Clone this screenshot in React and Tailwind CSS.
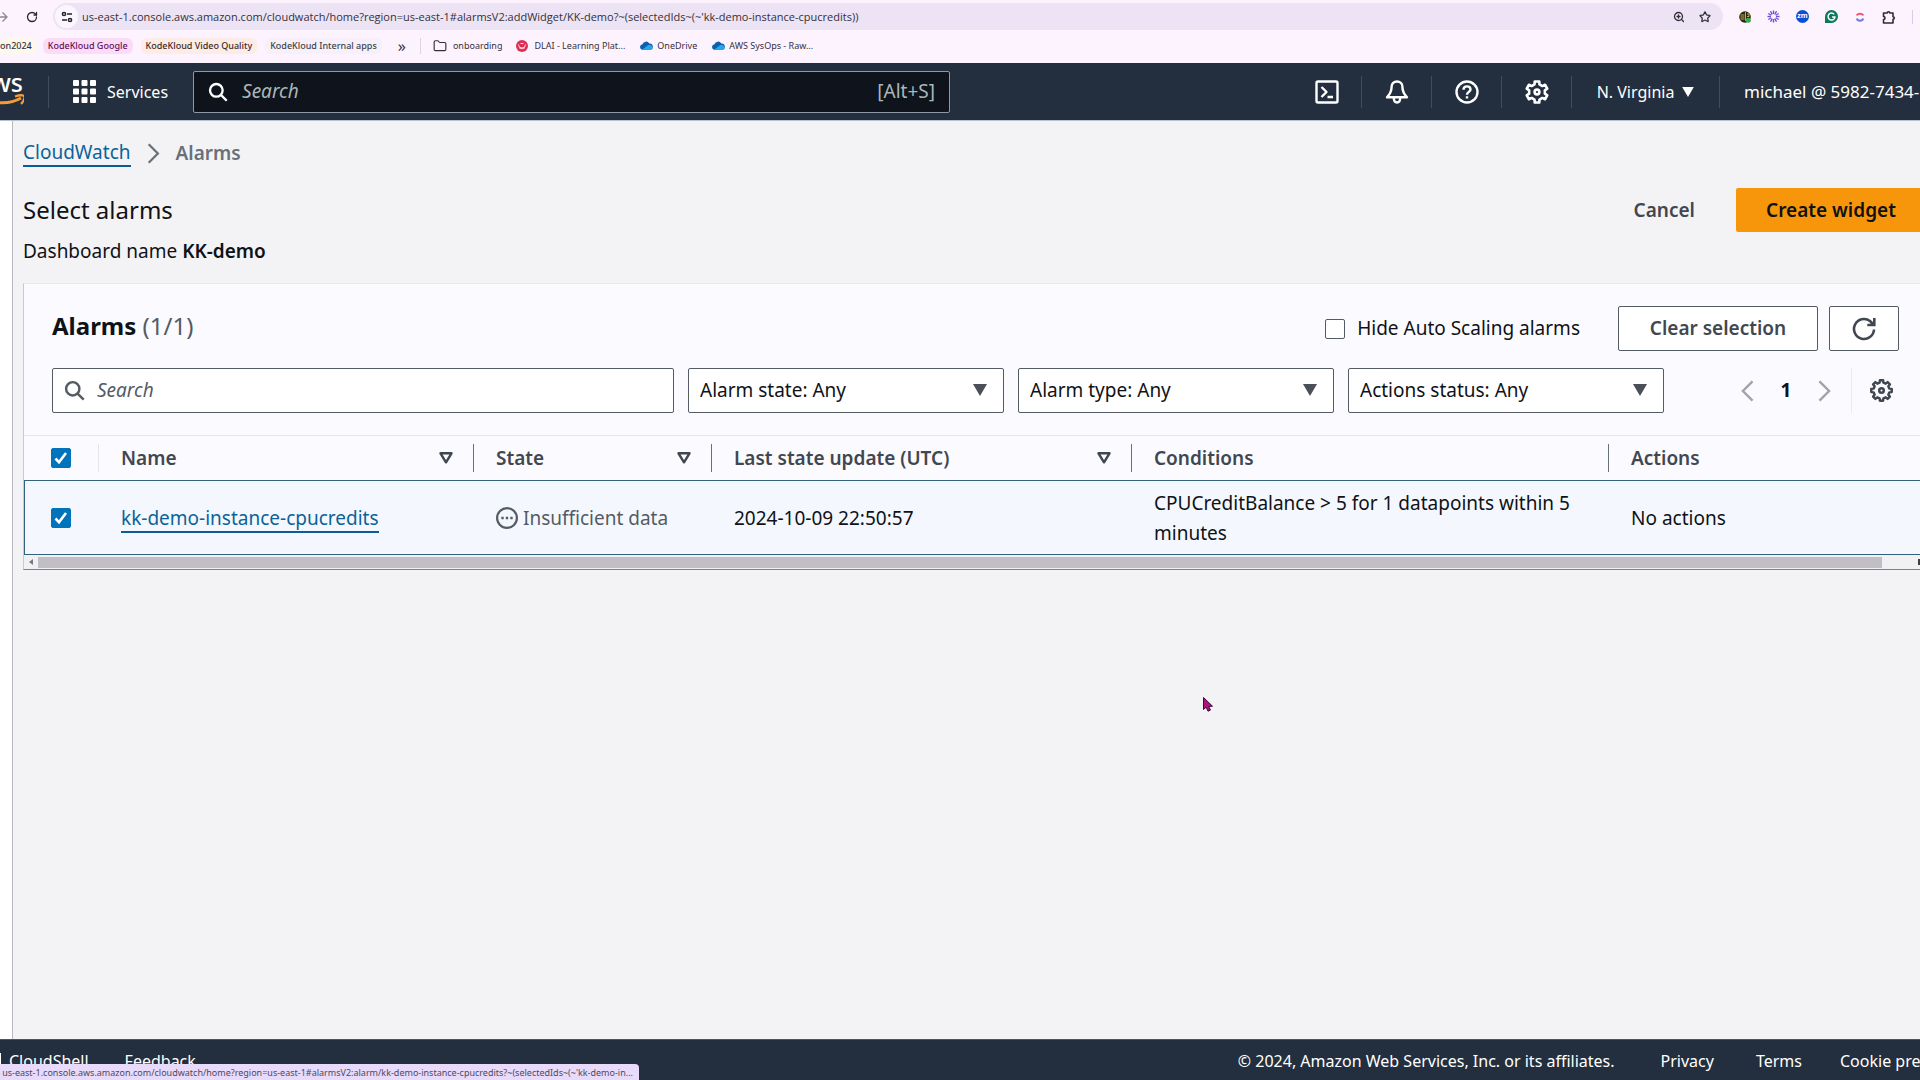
import { useState } from 'react'
import { Folder, RotateCw, Star, ZoomIn } from 'lucide-react'

const BOOKMARK_GROUPS = [
  { label: 'KodeKloud Google', cls: 'bg-[#fbdcf6] text-[#650f5c]' },
  { label: 'KodeKloud Video Quality', cls: 'bg-[#fdebe6] text-[#3b2a1e]' },
  { label: 'KodeKloud Internal apps', cls: 'bg-[#f7f0fa] text-[#3f4247]' },
]

const FILTERS = ['Alarm state: Any', 'Alarm type: Any', 'Actions status: Any']

const COLUMNS = [
  { label: 'Name', sortable: true },
  { label: 'State', sortable: true },
  { label: 'Last state update (UTC)', sortable: true },
  { label: 'Conditions' },
  { label: 'Actions', last: true },
]

// closed outline of a cog centred on 12,12
function gearPath(teeth, outer, inner) {
  const step = (Math.PI * 2) / teeth
  const pts = []
  for (let i = 0; i < teeth; i++) {
    const a = i * step - Math.PI / 2
    const spots = [
      [outer, -0.2],
      [outer, 0.2],
      [inner, 0.3],
      [inner, 0.7],
    ]
    spots.forEach(([r, k]) => {
      pts.push(`${(12 + r * Math.cos(a + k * step)).toFixed(2)} ${(12 + r * Math.sin(a + k * step)).toFixed(2)}`)
    })
  }
  return `M${pts.join('L')}Z`
}

const GearIcon = ({ teeth = 6, outer = 10.8, inner = 8, className }) => (
  <svg viewBox="0 0 24 24" fill="none" stroke="currentColor" strokeWidth="2.6" strokeLinejoin="round" className={className}>
    <path d={gearPath(teeth, outer, inner)} />
    <circle cx="12" cy="12" r="2.4" />
  </svg>
)

const SearchIcon = ({ className }) => (
  <svg viewBox="0 0 24 24" fill="none" stroke="currentColor" strokeWidth="2.8" className={className}>
    <circle cx="10" cy="10" r="7.6" />
    <path d="M15.5 15.5L22.5 22.5" />
  </svg>
)

const CloudShellIcon = () => (
  <svg viewBox="0 0 24 24" fill="none" stroke="currentColor" strokeWidth="2.4" strokeLinejoin="round" className="size-6">
    <rect x="1.5" y="1.5" width="21" height="21" rx="1.5" />
    <path d="M6.5 7l5 5-5 5M12.5 17h5.5" />
  </svg>
)

const BellIcon = () => (
  <svg viewBox="0 0 24 24" fill="none" stroke="currentColor" strokeWidth="2.4" strokeLinejoin="round" className="size-6">
    <path d="M12 1.5c-3 0-5.4 2.2-5.4 5.2 0 4-1.4 7.2-4.6 10.6h20c-3.2-3.4-4.6-6.6-4.6-10.6 0-3-2.4-5.2-5.4-5.2z" />
    <path d="M8.8 17.8c0 3 1.2 4.7 3.2 4.7s3.2-1.7 3.2-4.7" />
  </svg>
)

const HelpIcon = () => (
  <svg viewBox="0 0 24 24" fill="none" stroke="currentColor" strokeWidth="2.4" className="size-6">
    <circle cx="12" cy="12" r="10.5" />
    <path d="M8.5 9.8c0-2.2 1.5-3.4 3.5-3.4s3.5 1.2 3.5 3.1c0 2.3-3.5 2.5-3.5 5.2M12 16.2v2.4" />
  </svg>
)

const CaretDown = ({ className }) => (
  <svg viewBox="0 0 14 12" fill="currentColor" className={className}>
    <path d="M0 0h14L7 12z" />
  </svg>
)

const SortIcon = () => (
  <svg viewBox="0 0 14 12" fill="none" stroke="currentColor" strokeWidth="2.4" strokeLinejoin="round" className="h-3 w-3.5">
    <path d="M1.5 1.3h11L7 10.3z" />
  </svg>
)

const Chevron = ({ left, className }) => (
  <svg viewBox="0 0 14 24" fill="none" stroke="currentColor" strokeWidth="2.6" className={className}>
    <path d={left ? 'M12.5 1.5L2 12l10.5 10.5' : 'M1.5 1.5L12 12 1.5 22.5'} />
  </svg>
)

const OneDriveIcon = () => (
  <svg viewBox="0 0 14 9" className="h-[9px] w-3.5 shrink-0">
    <path d="M3.5 3.2A3.7 3.7 0 0 1 10.3 2.6 3 3 0 0 1 11 8.8H3A2.9 2.9 0 0 1 3.5 3.2z" fill="#0a5fb0" />
    <path d="M3 8.8 8.2 4.8a3.5 3.5 0 0 1 5 .6A2.2 2.2 0 0 1 12 8.8z" fill="#2aa5e8" />
  </svg>
)

const AwsLogo = () => (
  <svg viewBox="0 0 48 36" className="h-9 w-12 shrink-0">
    <text x="47" y="18" textAnchor="end" fill="#fff" fontFamily="Noto Sans, sans-serif" fontWeight="500" fontSize="25">
      aws
    </text>
    <path d="M3 20c12 11 30 11 42 4" fill="none" stroke="#f79b34" strokeWidth="3" />
    <path d="M39 22.5c4-1.5 8-1.5 9-.5s0 5-3 8" fill="none" stroke="#f79b34" strokeWidth="2.2" />
  </svg>
)

function Checkbox({ checked, onChange, label, children }) {
  return (
    <label className="flex items-center gap-3">
      <span className="relative flex size-5">
        <input
          type="checkbox"
          aria-label={label}
          checked={checked}
          onChange={(e) => onChange(e.target.checked)}
          className="size-5 appearance-none rounded-xs border border-[#545b64] bg-white checked:border-[#0073bb] checked:bg-[#0073bb]"
        />
        {checked && (
          <svg viewBox="0 0 20 20" fill="none" stroke="#fff" strokeWidth="2.6" className="pointer-events-none absolute inset-0 size-5">
            <path d="M4.5 10.5l3.5 3.8 7-9.3" />
          </svg>
        )}
      </span>
      {children}
    </label>
  )
}

function BrowserChrome() {
  return (
    <div className="shrink-0 bg-[#fdf3ff] text-[#35313b]">
      <div className="flex items-center pt-[3px]">
        <div className="flex w-[53px] items-center gap-[18px] text-[#2a2630]">
          <span className="flex w-2 justify-end overflow-hidden text-[#8d8794]">
            <svg viewBox="0 0 12 12" fill="none" stroke="currentColor" strokeWidth="1.3" className="size-3 shrink-0">
              <path d="M0 6h11M6.5 1.5L11 6l-4.5 4.5" />
            </svg>
          </span>
          <button aria-label="Reload">
            <RotateCw className="size-3" strokeWidth={2.6} />
          </button>
        </div>
        <div className="flex h-[27px] flex-1 items-center rounded-full bg-[#ece3f5] pl-0.5">
          <span className="flex size-[23px] items-center justify-center rounded-full bg-[#fbf5ff]">
            <svg viewBox="0 0 12 12" fill="none" stroke="#222" strokeWidth="1.5" className="size-3">
              <circle cx="3" cy="3" r="1.6" />
              <path d="M6 3h5M1 9h5" />
              <circle cx="9" cy="9" r="1.6" />
            </svg>
          </span>
          <input
            aria-label="Address"
            readOnly
            className="ml-1 min-w-0 flex-1 font-['Open_Sans',sans-serif] text-[11px] leading-4 outline-none"
            value="us-east-1.console.aws.amazon.com/cloudwatch/home?region=us-east-1#alarmsV2:addWidget/KK-demo?~(selectedIds~(~'kk-demo-instance-cpucredits))"
          />
          <div className="flex items-center gap-3.5 pr-3 text-[#35313b]">
            <ZoomIn className="size-3" strokeWidth={2.6} />
            <Star className="size-3" strokeWidth={2.6} />
          </div>
        </div>
        <div className="flex w-[197px] items-center gap-4 pl-4">
          <svg viewBox="0 0 12 12" className="size-3">
            <circle cx="6" cy="6" r="5.8" fill="#2b2616" />
            <path d="M1.5 4h4M1.5 6h4M1.5 8h4M6.5 1v9M8 3h2v2.5H8" stroke="#d8b84a" strokeWidth=".9" fill="none" />
            <circle cx="9.3" cy="9.3" r="2.5" fill="#2fae4c" />
          </svg>
          <svg viewBox="0 0 14 14" stroke="#6a4fd8" strokeWidth="1.5" className="size-[13px]">
            {[0, 30, 60, 90, 120, 150, 180, 210, 240, 270, 300, 330].map((r) => (
              <path key={r} d="M7 .5v3.8" transform={`rotate(${r} 7 7)`} />
            ))}
          </svg>
          <span className="flex size-[13px] items-center justify-center rounded-full bg-[#0b4fd6] text-[7px] font-bold text-white">zm</span>
          <svg viewBox="0 0 12 12" className="size-[13px]">
            <path d="M0 6a6 6 0 1 1 6 6H0z" fill="#0b7a5c" />
            <path d="M8.5 4A3.2 3.2 0 1 0 9.2 6.5H6.5" fill="none" stroke="#fff" strokeWidth="1.3" />
          </svg>
          <svg viewBox="0 0 12 12" fill="none" strokeWidth="2" className="size-3">
            <path d="M2.8 4.5C3.5 2 8.5 2 9.2 4.5" stroke="#f0557a" />
            <path d="M2.8 7.5C3.5 10.5 8.5 10.5 9.2 7.5" stroke="#6f7be0" />
          </svg>
          <svg viewBox="0 0 14 14" fill="none" stroke="#2f2b36" strokeWidth="1.6" strokeLinejoin="round" className="size-3.5">
            <path d="M1.5 3h3.7a1.3 1.3 0 0 1 2.6 0H11v3.7a1.3 1.3 0 0 1 0 2.6V13H1.5V9.5a1.5 1.5 0 0 0 0-3z" />
          </svg>
          <span className="h-3.5 w-px bg-[#dccbe8]" />
        </div>
      </div>
      <nav className="flex h-[33px] items-center overflow-hidden pb-0.5 text-[9px] leading-4 whitespace-nowrap">
        <span className="rounded-md bg-[#fdf8ea] pr-1 font-medium">on2024</span>
        <div className="ml-[7px] flex gap-2">
          {BOOKMARK_GROUPS.map((g) => (
            <button key={g.label} className={`rounded-md px-[5px] font-medium ${g.cls}`}>
              {g.label}
            </button>
          ))}
        </div>
        <span className="ml-4 text-base">»</span>
        <span className="ml-3.5 h-4 w-px bg-[#e3cfe8]" />
        <a href="#" className="ml-3 flex items-center gap-1.5">
          <Folder className="size-3.5" />
          onboarding
        </a>
        <a href="#" className="ml-3.5 flex items-center gap-1.5">
          <svg viewBox="0 0 12 12" className="size-3">
            <circle cx="6" cy="6" r="6" fill="#dd2f55" />
            <path d="M2.5 4.5a3.5 3.5 0 0 0 7 0M3 7.5a3.5 2.5 0 0 0 6 0M4.5 3.5h3" fill="none" stroke="#ffd3dc" />
          </svg>
          DLAI - Learning Plat...
        </a>
        <a href="#" className="ml-3.5 flex items-center gap-1">
          <OneDriveIcon />
          OneDrive
        </a>
        <a href="#" className="ml-3.5 flex items-center gap-1">
          <OneDriveIcon />
          AWS SysOps - Raw...
        </a>
      </nav>
    </div>
  )
}

function ConsoleNav() {
  return (
    <header className="flex h-[58px] shrink-0 items-center border-b border-[#b9c0cc] bg-[#232f3e] text-[16px] whitespace-nowrap text-white">
      <div className="flex w-6 justify-end overflow-hidden">
        <AwsLogo />
      </div>
      <span className="ml-6 h-8 w-px bg-[#414d5c]" />
      <button className="ml-6 flex items-center gap-[11px]">
        <svg viewBox="0 0 23 23" fill="currentColor" className="size-[23px]">
          {[0, 8.5, 17].map((y) => [0, 8.5, 17].map((x) => <rect key={`${x}-${y}`} x={x} y={y} width="6" height="6" rx="1" />))}
        </svg>
        Services
      </button>
      <div className="ml-[25px] flex h-[42px] w-[757px] items-center rounded-xs border border-[#8d99a8] bg-[#0f141c] px-3.5">
        <SearchIcon className="size-5" />
        <input
          aria-label="Search services"
          placeholder="Search"
          className="ml-3.5 min-w-0 flex-1 text-[19px] outline-none placeholder:text-[#aab7b8] placeholder:italic"
        />
        <span className="text-[19px] text-[#aab7b8]">[Alt+S]</span>
      </div>
      <div className="ml-auto flex items-center">
        {[
          ['CloudShell', <CloudShellIcon />],
          ['Notifications', <BellIcon />],
          ['Help', <HelpIcon />],
          ['Settings', <GearIcon className="size-6" />],
        ].map(([label, icon]) => (
          <button key={label} aria-label={label} className="flex h-8 w-[70px] items-center justify-center border-r border-[#414d5c]">
            {icon}
          </button>
        ))}
        <button className="flex h-8 w-[148px] items-center justify-center gap-2 border-r border-[#414d5c]">
          N. Virginia
          <CaretDown className="h-2.5 w-3" />
        </button>
        <button className="w-[200px] overflow-hidden pl-6 text-left text-[17px]">michael @ 5982-7434-</button>
      </div>
    </header>
  )
}

function AlarmsTable({ selected, onSelect }) {
  return (
    <table className="w-full table-fixed border-separate border-spacing-0 text-left text-[19px] leading-[30px]">
      <colgroup>
        <col className="w-[75px]" />
        <col className="w-[375px]" />
        <col className="w-[238px]" />
        <col className="w-[420px]" />
        <col className="w-[477px]" />
        <col />
      </colgroup>
      <thead className="text-[#414750]">
        <tr className="h-[45px]">
          <th className="border-t border-[#e4e6ea] p-0">
            <div className="flex h-7 items-center border-r border-[#e4e6ea] pl-[27px]">
              <Checkbox label="Select all alarms" checked={selected} onChange={onSelect} />
            </div>
          </th>
          {COLUMNS.map((c) => (
            <th key={c.label} className="border-t border-[#e4e6ea] p-0 font-semibold">
              <div className={`flex h-7 items-center justify-between pr-5 pl-[22px] ${c.last ? '' : 'border-r border-[#687078]'}`}>
                {c.label}
                {c.sortable && <SortIcon />}
              </div>
            </th>
          ))}
        </tr>
      </thead>
      <tbody>
        <tr className="h-[75px] *:border-y *:border-[#33617f] *:bg-[#f4f8fe] *:py-0">
          <td className="border-l pl-[26px]">
            <Checkbox label="Select kk-demo-instance-cpucredits" checked={selected} onChange={onSelect} />
          </td>
          <td className="pl-[22px]">
            <a href="#" className="border-b-2 border-[#0b5c97] text-[#0b6398]">kk-demo-instance-cpucredits</a>
          </td>
          <td className="pl-[22px] text-[#545b64]">
            <div className="flex items-center gap-[5px]">
              <svg viewBox="0 0 24 24" fill="none" stroke="currentColor" strokeWidth="2.4" className="size-[22px] shrink-0">
                <circle cx="12" cy="12" r="10.8" />
                <path d="M5.8 12h2.6M10.7 12h2.6M15.6 12h2.6" strokeWidth="2.6" />
              </svg>
              Insufficient data
            </div>
          </td>
          <td className="pl-[22px]">2024-10-09 22:50:57</td>
          <td className="pr-6 pl-[22px]">CPUCreditBalance &gt; 5 for 1 datapoints within 5 minutes</td>
          <td className="pl-[22px]">No actions</td>
        </tr>
      </tbody>
    </table>
  )
}

function AlarmsPanel() {
  const [selected, setSelected] = useState(true)
  const [hideScaling, setHideScaling] = useState(false)

  return (
    <section className="border-t border-b border-l border-t-[#e8e8ea] border-b-[#7f8287] border-l-[#c8cacd] bg-[#fbfaff]">
      <div className="flex items-start pt-[22px] pr-[21px] pl-7">
        <h2 className="text-[24px] leading-10 font-bold">
          Alarms <span className="font-normal text-[#545b64]">({selected ? '1/1' : '1'})</span>
        </h2>
        <div className="ml-auto flex items-center text-[19px]">
          <Checkbox checked={hideScaling} onChange={setHideScaling}>
            Hide Auto Scaling alarms
          </Checkbox>
          <button
            onClick={() => setSelected(false)}
            className="ml-[38px] h-[45px] w-[200px] rounded-xs border border-[#545b64] bg-white font-semibold text-[#414750]"
          >
            Clear selection
          </button>
          <button
            aria-label="Refresh"
            className="ml-[11px] flex h-[45px] w-[70px] items-center justify-center rounded-xs border border-[#545b64] bg-white text-[#414750]"
          >
            <svg viewBox="0 0 24 24" fill="none" stroke="currentColor" strokeWidth="2.6" className="size-6">
              <path d="M22 12.5a10 10 0 1 1-4-8.5l3 3M22.3 1v7h-7" />
            </svg>
          </button>
        </div>
      </div>

      <div className="flex items-center pt-[17px] pr-[27px] pb-[22px] pl-7 text-[19px]">
        <div className="flex h-[45px] w-[622px] items-center rounded-xs border border-[#545b64] bg-white px-[11px]">
          <SearchIcon className="size-[21px] text-[#545b64]" />
          <input
            aria-label="Search alarms"
            placeholder="Search"
            className="ml-3 min-w-0 flex-1 outline-none placeholder:text-[#545b64] placeholder:italic"
          />
        </div>
        {FILTERS.map((f) => (
          <div key={f} className="relative ml-3.5 w-[316px]">
            <select aria-label={f.split(':')[0]} className="h-[45px] w-full appearance-none rounded-xs border border-[#545b64] bg-white pl-[11px]">
              <option>{f}</option>
            </select>
            <CaretDown className="pointer-events-none absolute top-4 right-4 h-3 w-4 text-[#4a4f58]" />
          </div>
        ))}
        <div className="ml-auto flex items-center">
          <button aria-label="Previous page" className="text-[#a0a4aa]">
            <Chevron left className="h-[22px] w-[13px]" />
          </button>
          <span className="w-16 text-center font-bold">1</span>
          <button aria-label="Next page" className="text-[#a0a4aa]">
            <Chevron className="h-[22px] w-[13px]" />
          </button>
          <span className="ml-5 h-[45px] w-px bg-[#e9ebed]" />
          <button aria-label="Preferences" className="ml-[18px] text-[#414750]">
            <GearIcon teeth={8} outer={10.8} inner={8.4} className="size-[23px]" />
          </button>
        </div>
      </div>

      <AlarmsTable selected={selected} onSelect={setSelected} />

      <div className="flex h-3.5 items-center bg-[#f1f1f4]">
        <span className="flex w-3.5 justify-center text-[#77797e]">
          <svg viewBox="0 0 4 6" fill="currentColor" className="h-1.5 w-1">
            <path d="M4 0v6L0 3z" />
          </svg>
        </span>
        <span className="h-[11px] flex-1 bg-[#c1bfc3]" />
        <span className="flex w-[38px] justify-end">
          <span className="h-1.5 w-0.5 bg-[#3c3e42]" />
        </span>
      </div>
    </section>
  )
}

export default function App() {
  return (
    <div className="relative flex h-screen flex-col overflow-hidden bg-[#f3f3f6] font-['Noto_Sans',sans-serif] text-[#0f1216]">
      <BrowserChrome />
      <ConsoleNav />

      <div className="flex min-h-0 flex-1">
        <aside className="w-[13px] shrink-0 border-r border-[#b8babf] bg-white" />
        <main className="min-w-0 flex-1 pl-2.5">
          <nav aria-label="Breadcrumb" className="flex items-center gap-4 pt-[17px] text-[19px] leading-[30px]">
            <a href="#" className="border-b-2 border-[#0b5c97] leading-[25px] text-[#0b6398]">CloudWatch</a>
            <Chevron className="h-[21px] w-[13px] text-[#687078]" />
            <span className="font-semibold text-[#687078]">Alarms</span>
          </nav>
          <div className="flex items-center pt-5 pb-1.5">
            <h1 className="text-[24px] leading-8">Select alarms</h1>
            <button className="ml-auto text-[19px] font-semibold text-[#414750]">Cancel</button>
            <button className="ml-[41px] h-11 w-[184px] rounded-l-xs bg-[#f7960a] pl-1.5 text-[19px] font-semibold">Create widget</button>
          </div>
          <p className="pb-[19px] text-[19px] leading-[26px]">
            Dashboard name <b className="font-semibold">KK-demo</b>
          </p>
          <AlarmsPanel />
        </main>
      </div>

      <footer className="flex h-[41px] shrink-0 items-center border-t border-[#4b5563] bg-[#232f3e] pt-0.5 text-[16px] whitespace-nowrap text-white">
        <span className="h-4 w-px bg-white" />
        <a href="#" className="ml-2">CloudShell</a>
        <a href="#" className="ml-9">Feedback</a>
        <span className="ml-auto">© 2024, Amazon Web Services, Inc. or its affiliates.</span>
        <a href="#" className="ml-[46px]">Privacy</a>
        <a href="#" className="ml-[42px]">Terms</a>
        <a href="#" className="ml-[38px] w-20 overflow-hidden">Cookie preferences</a>
      </footer>

      {/* link target bubble shown by the browser while hovering the alarm */}
      <div className="absolute bottom-0 left-0 flex h-4 w-[639px] items-center justify-end overflow-hidden rounded-tr-sm bg-[#e8dafb] pt-0.5 pr-1.5 text-[9px] whitespace-nowrap text-[#4f4a58]">
        us-east-1.console.aws.amazon.com/cloudwatch/home?region=us-east-1#alarmsV2:alarm/kk-demo-instance-cpucredits?~(selectedIds~(~'kk-demo-in...
      </div>

      <svg viewBox="0 0 10 15" className="absolute top-[697px] left-[1203px] h-[15px] w-2.5">
        <path d="M.5.5v12l2.7-2.3 1.8 4 2.5-1.2-1.8-3.5 3.8-.3z" fill="#b0107f" stroke="#3d0a30" />
      </svg>
    </div>
  )
}
